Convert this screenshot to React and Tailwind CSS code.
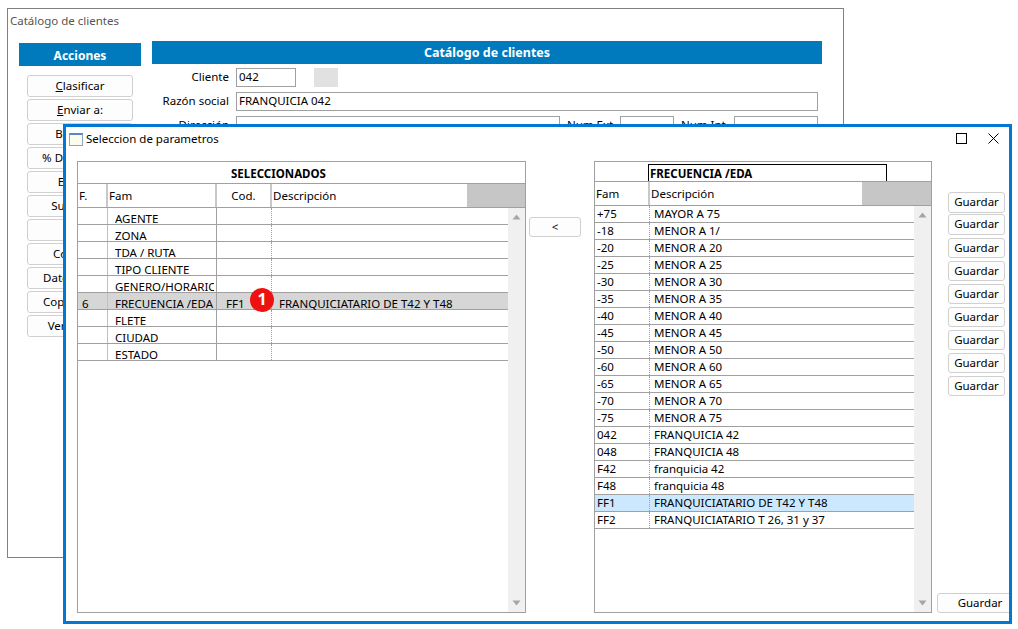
import React from "react";

const font = { fontFamily: '"Noto Sans", Tahoma, sans-serif' };

const actions = [
  [<><u>C</u>lasificar</>],
  [<><u>E</u>nviar a:</>],
  ["Bloquear"],
  ["% Descuentos"],
  ["Eliminar"],
  ["Sucursales"],
  ["Notas"],
  ["Contactos"],
  ["Datos fiscales"],
  ["Copiar cliente"],
  ["Ver historial"],
];

const leftRows = [
  ["", "AGENTE"],
  ["", "ZONA"],
  ["", "TDA / RUTA"],
  ["", "TIPO CLIENTE"],
  ["", "GENERO/HORARIO"],
  ["6", "FRECUENCIA /EDA", "FF1", "FRANQUICIATARIO DE T42 Y T48"],
  ["", "FLETE"],
  ["", "CIUDAD"],
  ["", "ESTADO"],
];

const rightRows = [
  ["+75", "MAYOR A 75"],
  ["-18", "MENOR A 1/"],
  ["-20", "MENOR A 20"],
  ["-25", "MENOR A 25"],
  ["-30", "MENOR A 30"],
  ["-35", "MENOR A 35"],
  ["-40", "MENOR A 40"],
  ["-45", "MENOR A 45"],
  ["-50", "MENOR A 50"],
  ["-60", "MENOR A 60"],
  ["-65", "MENOR A 65"],
  ["-70", "MENOR A 70"],
  ["-75", "MENOR A 75"],
  ["042", "FRANQUICIA 42"],
  ["048", "FRANQUICIA 48"],
  ["F42", "franquicia 42"],
  ["F48", "franquicia 48"],
  ["FF1", "FRANQUICIATARIO DE T42 Y T48"],
  ["FF2", "FRANQUICIATARIO T 26, 31 y 37"],
];

const guardarButtons = [
  "mt-[31px] h-[21px]", "mt-[1px] h-[21px]", "mt-[3px] h-[20px]", "mt-[3px] h-[20px]", "mt-[3px] h-[20px]",
  "mt-[3px] h-[20px]", "mt-[3px] h-[20px]", "mt-[3px] h-[20px]", "mt-[3px] h-[20px]",
];

function Scrollbar() {
  return (
    <div className="w-[17px] bg-[#f0f0f0] flex flex-col justify-between items-center py-[6px] shrink-0">
      <svg width="9" height="6" viewBox="0 0 9 6"><path d="M4.5 0.5 L8.5 5.5 L0.5 5.5 Z" fill="#a6a6a6" /></svg>
      <svg width="9" height="6" viewBox="0 0 9 6"><path d="M0.5 0.5 L8.5 0.5 L4.5 5.5 Z" fill="#a6a6a6" /></svg>
    </div>
  );
}

function Btn({ className, children }) {
  return (
    <div className={`flex items-center justify-center rounded-[3px] border border-[#d0d0d0] bg-[#fdfdfd] pb-[1px] whitespace-nowrap overflow-hidden ${className}`}>
      {children}
    </div>
  );
}

function Field({ className }) {
  return <div className={`h-[19px] border border-[#a0a0a0] pl-[2px] leading-[16px] ${className}`} />;
}

export default function App() {
  return (
    <div className="relative w-[1018px] h-[629px] overflow-hidden bg-white text-[11.5px] text-black" style={font}>
      {/* background window */}
      <div className="absolute left-[7px] top-[8px] w-[837px] h-[550px] border border-[#808080] bg-white">
        <div className="pl-[2px] pt-[3px] h-[32px] leading-[18px] text-[#555555]">Catálogo de clientes</div>
        <div className="flex pl-[11px]">
          <div className="w-[122px] shrink-0 mt-[2px] mr-[11px]">
            <div className="h-[23px] bg-[#0079bd] text-white font-bold text-center leading-[25px] text-[12px]">Acciones</div>
            <div className="flex flex-col gap-[2px] pt-[9px] pl-[8px]">
              {actions.map(([label], i) => (
                <Btn key={i} className="w-[106px] h-[22px]">{label}</Btn>
              ))}
            </div>
          </div>
          <div className="w-[670px]">
            <div className="h-[23px] bg-[#0079bd] text-white font-bold text-center leading-[24px] text-[12.5px]">Catálogo de clientes</div>
            <div className="flex items-center mt-[4px] h-[19px]">
              <div className="w-[77px] text-right mr-[7px] pb-[2px]">Cliente</div>
              <div className="w-[60px] h-[19px] border border-[#a0a0a0] pl-[2px] leading-[15px]">042</div>
              <div className="w-[24px] h-[19px] ml-[18px] bg-[#e1e1e1]" />
            </div>
            <div className="flex items-center mt-[5px] h-[19px]">
              <div className="w-[77px] text-right mr-[7px] pb-[1px]">Razón social</div>
              <div className="w-[582px] h-[19px] border border-[#a0a0a0] pl-[2px] leading-[15px]">FRANQUICIA 042</div>
            </div>
            <div className="flex items-center mt-[5px] h-[19px]">
              <div className="w-[77px] text-right mr-[7px] pb-[1px]">Dirección</div>
              <Field className="w-[324px]" />
              <div className="ml-[7px] w-[53px] pb-[1px]">Num Ext</div>
              <Field className="w-[54px]" />
              <div className="ml-[7px] w-[53px] pb-[1px]">Num Int</div>
              <Field className="w-[84px]" />
            </div>
          </div>
        </div>
      </div>

      {/* dialog */}
      <div className="absolute left-[63px] top-[124px] w-[949px] h-[500px] border-[3px] border-[#0078d4] bg-white flex flex-col overflow-hidden">
        <div className="h-[34px] shrink-0 flex pl-[3px] pt-[6px]">
          <div className="w-[14px] h-[13px] border border-[#8ea4c4] border-t-[2px] border-t-[#5b87c0] bg-[#fbfbee]" />
          <div className="ml-[3px] leading-[11px]">Seleccion de parametros</div>
          <div className="ml-auto flex">
            <svg width="11" height="11" viewBox="0 0 11 11"><rect x="0.5" y="0.5" width="10" height="10" fill="none" stroke="#000" /></svg>
            <svg width="11" height="11" viewBox="0 0 11 11" className="ml-[21px] mr-[10px]"><path d="M0.5 0.5 L10.5 10.5 M10.5 0.5 L0.5 10.5" stroke="#000" strokeWidth="1" /></svg>
          </div>
        </div>

        <div className="flex pl-[11px]">
          {/* left table */}
          <div className="w-[449px] h-[452px] border border-[#a0a0a0] flex flex-col shrink-0">
            <div className="h-[21px] font-bold text-center leading-[23px] pr-[46px]">SELECCIONADOS</div>
            <div className="h-[25px] flex border-y border-[#a0a0a0] leading-[23px] shrink-0">
              <div className="w-[30px] border-r-2 border-[#c8c8c8] pl-[1px]">F.</div>
              <div className="w-[109px] border-r-2 border-[#c8c8c8] pl-[1px]">Fam</div>
              <div className="w-[55px] border-r-2 border-[#c8c8c8] text-center">Cod.</div>
              <div className="w-[195px] pl-[1px]">Descripción</div>
              <div className="flex-1 bg-[#c6c6c6]" />
            </div>
            <div className="flex flex-1">
              <div className="flex-1 flex flex-col">
                {leftRows.map((r, i) => (
                  <div key={i} className={`relative h-[17px] flex border-b border-[#a0a0a0] leading-[14px] ${r[0] ? "bg-[#d6d6d6]" : ""}`}>
                    <div className="w-[30px] border-r border-[#c0c0c0] pl-[4px] pt-[4px]">{r[0]}</div>
                    <div className="w-[109px] border-r border-[#a0a0a0] pl-[7px] pt-[4px]">
                      <div className="w-[99px] overflow-hidden whitespace-nowrap">{r[1]}</div>
                    </div>
                    <div className="w-[55px] border-r border-dotted border-[#a0a0a0] pl-[9px] pt-[4px]">{r[2]}</div>
                    <div className="flex-1 pl-[7px] pt-[4px] whitespace-nowrap">{r[3]}</div>
                    {r[2] && (
                      <div className="absolute left-[172px] top-[-5px] w-[24px] h-[24px] rounded-full bg-[#ee1111] text-white font-bold text-[16px] leading-[23px] text-center">1</div>
                    )}
                  </div>
                ))}
              </div>
              <Scrollbar />
            </div>
          </div>

          {/* center */}
          <div className="w-[68px] shrink-0 pl-[3px] pt-[56px]">
            <Btn className="w-[52px] h-[20px]">&lt;</Btn>
          </div>

          {/* right table */}
          <div className="w-[338px] h-[452px] border border-[#a0a0a0] flex flex-col shrink-0">
            <div className="h-[19px] pl-[53px] pt-[2px] shrink-0">
              <div className="w-[239px] h-[17px] border border-b-0 border-black font-bold leading-[18px] pl-[1px]">FRECUENCIA /EDA</div>
            </div>
            <div className="h-[25px] flex border-y border-[#a0a0a0] leading-[24px] shrink-0">
              <div className="w-[55px] border-r-2 border-[#c8c8c8] pl-[1px]">Fam</div>
              <div className="w-[212px] pl-[1px]">Descripción</div>
              <div className="flex-1 bg-[#c6c6c6]" />
            </div>
            <div className="flex flex-1">
              <div className="flex-1 flex flex-col">
                {rightRows.map((r, i) => (
                  <div key={i} className={`h-[17px] flex border-b border-[#a0a0a0] leading-[16px] ${r[0] === "FF1" ? "bg-[#cce8ff]" : ""}`}>
                    <div className="w-[55px] border-r border-dotted border-[#a0a0a0] pl-[2px]">{r[0]}</div>
                    <div className="flex-1 pl-[4px] whitespace-nowrap">{r[1]}</div>
                  </div>
                ))}
              </div>
              <Scrollbar />
            </div>
          </div>

          {/* right buttons */}
          <div className="flex-1 flex flex-col h-[452px] pl-[5px]">
            {guardarButtons.map((m, i) => (
              <Btn key={i} className={`w-[57px] ml-[11px] shrink-0 ${m}`}>Guardar</Btn>
            ))}
            <Btn className="w-[86px] h-[20px] mt-auto shrink-0">Guardar</Btn>
          </div>
        </div>
      </div>
    </div>
  );
}
